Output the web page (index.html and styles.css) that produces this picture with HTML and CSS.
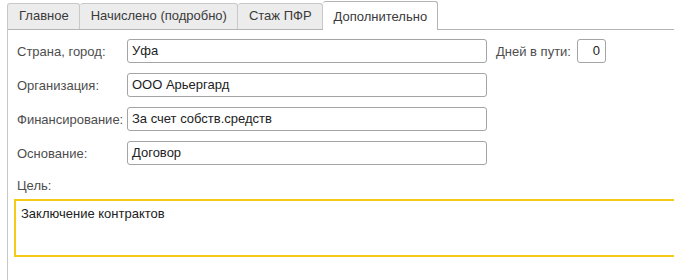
FILE: index.html
```html
<!DOCTYPE html>
<html lang="ru">
<head>
    <meta charset="UTF-8">
    <meta name="viewport" content="width=device-width, initial-scale=1.0">
    <title>Командировка</title>
    <link rel="stylesheet" href="styles.css">
</head>
<body>

    <!-- Tabs -->
    <div class="tabs">
        <div class="tab">Главное</div>
        <div class="tab">Начислено (подробно)</div>
        <div class="tab">Стаж ПФР</div>
        <div class="tab active">Дополнительно</div>
    </div>

    <!-- Page content -->
    <div class="panel">
        <div class="row">
            <label class="label">Страна, город:</label>
            <div class="field">Уфа</div>
            <label class="label-days">Дней в пути:</label>
            <div class="field small">0</div>
        </div>
        <div class="row">
            <label class="label">Организация:</label>
            <div class="field">ООО Арьергард</div>
        </div>
        <div class="row">
            <label class="label">Финансирование:</label>
            <div class="field">За счет собств.средств</div>
        </div>
        <div class="row">
            <label class="label">Основание:</label>
            <div class="field">Договор</div>
        </div>

        <div class="goal-label">Цель:</div>
        <div class="memo">Заключение контрактов</div>
    </div>

</body>
</html>
```

FILE: styles.css
```css
body {
    font-family: "Liberation Sans", Arial, sans-serif;
    font-size: 13px;
    color: #333;
    background: #fff;
    margin: 0;
    overflow: hidden;
    width: 674px;
    height: 280px;
}

.tabs {
    display: flex;
    align-items: flex-end;
    padding-left: 7px;
    height: 29px;
}

.tab {
    height: 25px;
    line-height: 24px;
    padding: 0 10px 0 11px;
    background: #ececec;
    border: 1px solid #c8c8c8;
    border-bottom: none;
    border-left: none;
    border-radius: 3px 3px 0 0;
    color: #3a3a3a;
}

.tab:first-child {
    border-left: 1px solid #c8c8c8;
}

.tab.active {
    height: 28px;
    line-height: 30px;
    background: #fff;
    border-color: #b4b4b4;
    position: relative;
    top: 1px;
}

.panel {
    box-sizing: border-box;
    margin-left: 7px;
    border-left: 1px solid #c8c8c8;
    border-top: 1px solid #b4b4b4;
    padding: 9px 0 0 9px;
    height: 251px;
}

.row {
    display: flex;
    align-items: center;
    height: 24px;
    margin-bottom: 10px;
}

.label {
    width: 110px;
    color: #4d4d4d;
}

.field {
    box-sizing: border-box;
    width: 360px;
    height: 24px;
    line-height: 22px;
    padding: 0 4px;
    border: 1px solid #a4a4a4;
    border-radius: 3px;
    color: #222;
}

.label-days {
    margin-left: 9px;
    width: 81px;
    color: #4d4d4d;
}

.field.small {
    width: 29px;
    text-align: right;
    padding-right: 5px;
}

.goal-label {
    color: #4d4d4d;
    padding-top: 3px;
    line-height: 16px;
}

.memo {
    box-sizing: border-box;
    margin-left: -3px;
    margin-top: 5px;
    width: 660px;
    height: 58px;
    border: 2px solid #f7c919;
    border-right: none;
    padding: 5px;
    color: #222;
}
```
